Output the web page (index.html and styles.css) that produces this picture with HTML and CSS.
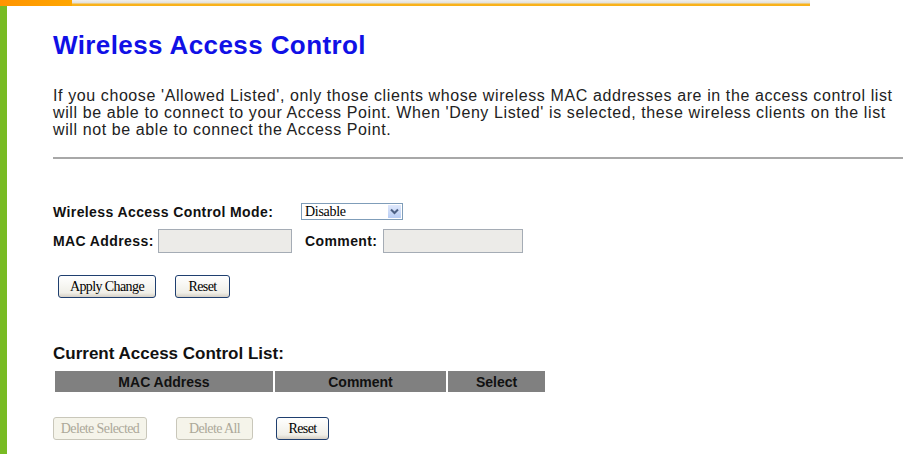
FILE: index.html
```html
<!DOCTYPE html>
<html lang="en">
<head>
    <meta charset="UTF-8">
    <title>Wireless Access Control</title>
    <link rel="stylesheet" href="styles.css">
</head>
<body>
    <div class="topbar">
        <div class="topbar-tab"></div>
        <div class="topbar-line"></div>
    </div>
    <div class="page">
        <div class="side"></div>
        <div class="content">
            <h1 class="title">Wireless Access Control</h1>
            <p class="intro">If you choose 'Allowed Listed', only those clients whose wireless MAC addresses are in the access control list will be able to connect to your Access Point. When 'Deny Listed' is selected, these wireless clients on the list will not be able to connect the Access Point.</p>
            <hr class="rule">

            <form class="acl-form">
                <div class="row">
                    <label class="lbl lbl-mode">Wireless Access Control Mode:</label>
                    <div class="select">
                        <span class="select-value">Disable</span>
                        <span class="select-arrow">
                            <svg width="9" height="7" viewBox="0 0 9 7"><path d="M1 1.5 L4.5 5 L8 1.5" fill="none" stroke="#4d6185" stroke-width="2"/></svg>
                        </span>
                    </div>
                </div>
                <div class="row">
                    <label class="lbl lbl-mac">MAC Address:</label>
                    <input class="field field-mac" type="text">
                    <label class="lbl lbl-comment">Comment:</label>
                    <input class="field field-comment" type="text">
                </div>
                <div class="buttons">
                    <button type="button" class="btn btn-apply">Apply Change</button>
                    <button type="button" class="btn btn-reset">Reset</button>
                </div>
            </form>

            <h2 class="list-title">Current Access Control List:</h2>
            <table class="acl-table">
                <tr>
                    <th class="col-mac">MAC Address</th>
                    <th class="col-comment">Comment</th>
                    <th class="col-select">Select</th>
                </tr>
            </table>
            <div class="buttons buttons-list">
                <button type="button" class="btn btn-delsel" disabled>Delete Selected</button>
                <button type="button" class="btn btn-delall" disabled>Delete All</button>
                <button type="button" class="btn btn-reset2">Reset</button>
            </div>
        </div>
    </div>
</body>
</html>
```

FILE: styles.css
```css
body {
    margin: 0;
    padding: 0;
    background-color: #fff;
    font-family: "Liberation Sans", Arial, sans-serif;
    color: #000;
    height: 454px;
    overflow: hidden;
}

.topbar {
    display: flex;
    height: 6px;
}

.topbar-tab {
    width: 72px;
    background: linear-gradient(to right, #ff9400, #ffa600);
}

.topbar-line {
    width: 738px;
    background: linear-gradient(to bottom, #f2f0ec 0px, #e2e0dc 3px, #fab41d 4px, #f7b019 6px);
}

.page {
    display: flex;
    height: 448px;
}

.side {
    width: 7px;
    background-color: #78bb24;
}

.content {
    flex: 1;
    padding-left: 46px;
}

.title {
    margin: 25px 0 0 0;
    font-size: 26px;
    line-height: 29px;
    font-weight: bold;
    letter-spacing: 0.4px;
    color: #1010e6;
}

.intro {
    margin: 27px 0 0 0;
    font-size: 16px;
    line-height: 17px;
    letter-spacing: 0.6px;
    color: #222;
}

.rule {
    margin: 19px 0 0 0;
    border: 0;
    border-top: 2px solid #a8a8a8;
    height: 0;
}

.acl-form {
    margin-top: 44px;
}

.row {
    display: flex;
    align-items: center;
    margin-bottom: 9px;
}

.lbl {
    font-size: 14px;
    font-weight: bold;
    letter-spacing: 0.4px;
    color: #111;
}

.lbl-mode {
    width: 248px;
}

.lbl-mac {
    width: 105px;
}

.lbl-comment {
    width: 78px;
    margin-left: 13px;
}

.select {
    display: flex;
    width: 100px;
    height: 15px;
    border: 1px solid #7f9db9;
    background: #fff;
}

.select-value {
    flex: 1;
    padding-left: 3px;
    font-family: "Liberation Serif", "Times New Roman", serif;
    font-size: 14px;
    line-height: 15px;
    letter-spacing: -0.3px;
}

.select-arrow {
    width: 15px;
    display: flex;
    align-items: center;
    justify-content: center;
    background: linear-gradient(to bottom, #dfe8fb, #b8cdf5);
    border: 1px solid #fff;
    box-sizing: border-box;
}

.field {
    height: 24px;
    box-sizing: border-box;
    border: 1px solid #a5acb5;
    background-color: #ecebe8;
    padding: 0 3px;
}

.field-mac {
    width: 134px;
}

.field-comment {
    width: 140px;
}

.buttons {
    display: flex;
    gap: 19px;
    margin-top: 22px;
    padding-left: 5px;
}

.btn {
    height: 23px;
    padding: 0 5px;
    border: 1px solid #1f3f6f;
    border-radius: 3px;
    background: linear-gradient(to bottom, #ffffff, #f0efe8 80%, #d6d0c5);
    font-family: "Liberation Serif", "Times New Roman", serif;
    font-size: 14px;
    letter-spacing: -0.6px;
    color: #000;
}

.btn-apply {
    width: 98px;
}

.btn-reset {
    width: 55px;
}

.btn:disabled {
    border-color: #c9c7ba;
    background: #f5f4ea;
    color: #aca899;
}

.list-title {
    margin: 46px 0 0 0;
    font-size: 17px;
    line-height: 19px;
    font-weight: bold;
    color: #111;
}

.acl-table {
    border-collapse: separate;
    border-spacing: 2px 0;
    margin-top: 8px;
}

.acl-table th {
    background-color: #808080;
    height: 21px;
    padding: 0;
    font-size: 14px;
    font-weight: bold;
    color: #111;
    text-align: center;
}

.col-mac {
    width: 218px;
}

.col-comment {
    width: 171px;
}

.col-select {
    width: 97px;
}

.buttons-list {
    margin-top: 25px;
    padding-left: 0;
    gap: 0;
}

.btn-delsel {
    width: 94px;
}

.btn-delall {
    width: 77px;
    margin-left: 29px;
}

.btn-reset2 {
    width: 53px;
    margin-left: 23px;
}
```
